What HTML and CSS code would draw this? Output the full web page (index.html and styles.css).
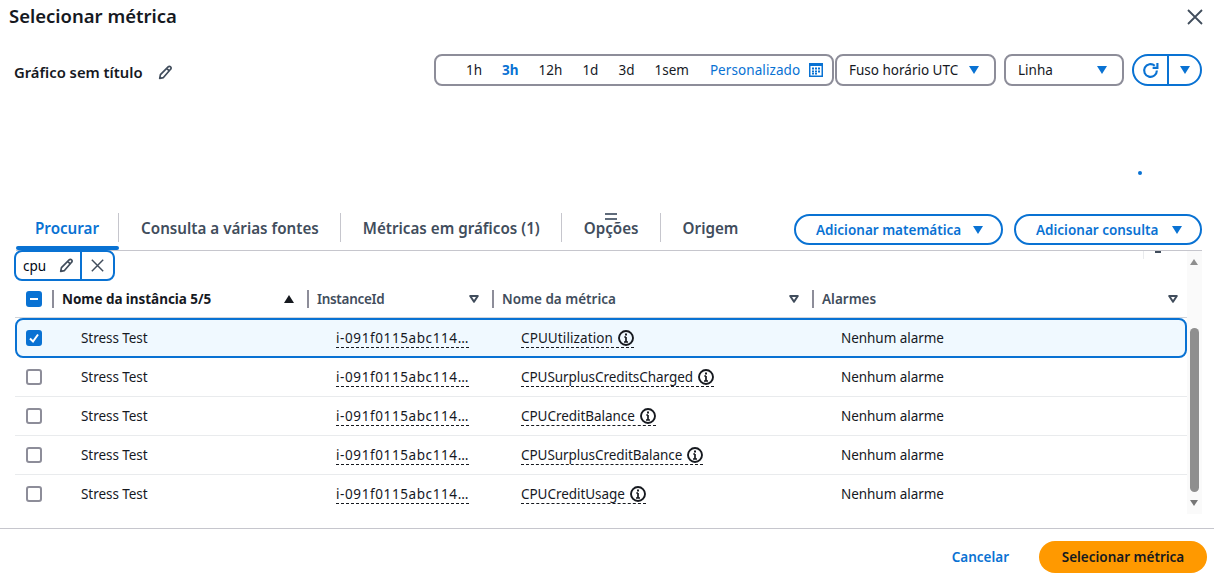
FILE: index.html
```html
<!DOCTYPE html>
<html lang="pt">
<head>
  <meta charset="UTF-8">
  <title>Selecionar métrica</title>
  <link rel="stylesheet" href="styles.css">
</head>
<body>
  <svg class="defs" width="0" height="0">
    <symbol id="pencil" viewBox="0 0 16 16"><path d="M1.8 14.2l.8-4L10.800 2c.8-.8 1.900-.8 2.600 0 .8.7.8 1.800 0 2.600L5.800 13.400l-4 .8zM9.300 3.500l3.200 3.200" fill="none" stroke="currentColor" stroke-width="1.8" stroke-linejoin="round"/></symbol>
    <symbol id="close" viewBox="0 0 16 16"><path d="M1 1l14 14M15 1L1 15" fill="none" stroke="currentColor" stroke-width="1.8"/></symbol>
    <symbol id="caret" viewBox="0 0 10 8"><path d="M0 0h10L5 8z" fill="currentColor"/></symbol>
    <symbol id="filter" viewBox="0 0 10 8"><path d="M1.200 1h7.600L5 6.800z" fill="none" stroke="currentColor" stroke-width="2" stroke-linejoin="round"/></symbol>
    <symbol id="info" viewBox="0 0 16 16"><circle cx="8" cy="8" r="7" fill="none" stroke="currentColor" stroke-width="1.9"/><path d="M8 7v5M6 12h4M6.300 7H8" fill="none" stroke="currentColor" stroke-width="1.7"/><rect x="7" y="3.500" width="2" height="2" fill="currentColor"/></symbol>
  </svg>

  <div class="modal-head">
    <h1>Selecionar métrica</h1>
    <svg class="close-icon"><use href="#close"/></svg>
  </div>

  <div class="toolbar">
    <div class="chart-title">
      <span>Gráfico sem título</span>
      <svg class="pencil-icon"><use href="#pencil"/></svg>
    </div>
    <div class="controls">
      <div class="box range">
        <span>1h</span>
        <span class="active">3h</span>
        <span>12h</span>
        <span>1d</span>
        <span>3d</span>
        <span>1sem</span>
        <span class="custom">Personalizado
          <svg class="cal-icon" viewBox="0 0 14 14"><path fill="#0972d3" fill-rule="evenodd" d="M0 0h14v14H0zM1.500 3v9.500h11V3z"/><path fill="#0972d3" d="M3 4.500h2v2H3zM6 4.500h2v2H6zM9 4.500h2v2H9zM3 7.500h2v2H3zM6 7.500h2v2H6zM9 7.500h2v2H9zM3 10h2v1.500H3zM6 10h2v1.500H6z"/></svg>
        </span>
      </div>
      <div class="box select tz">Fuso horário UTC <svg class="caret-icon"><use href="#caret"/></svg></div>
      <div class="box select kind">Linha <svg class="caret-icon"><use href="#caret"/></svg></div>
      <div class="refresh">
        <span class="refresh-left">
          <svg class="refresh-icon" viewBox="0 0 16 16"><path d="M14 8a6 6 0 1 1-2-4.500" fill="none" stroke="currentColor" stroke-width="2"/><path d="M14.500 1v4.500H10" fill="none" stroke="currentColor" stroke-width="2"/></svg>
        </span>
        <span class="refresh-right"><svg class="caret-icon"><use href="#caret"/></svg></span>
      </div>
    </div>
  </div>

  <div class="chart-area"><span class="dot"></span></div>

  <div class="tabs-row">
    <div class="tabs">
      <span class="tab current">Procurar</span>
      <span class="tab">Consulta a várias fontes</span>
      <span class="tab">Métricas em gráficos (1)</span>
      <span class="tab">Opções</span>
      <span class="tab last">Origem</span>
      <span class="drag-mark"></span>
    </div>
    <div class="tab-actions">
      <button class="pill math">Adicionar matemática <svg class="caret-icon"><use href="#caret"/></svg></button>
      <button class="pill query">Adicionar consulta <svg class="caret-icon"><use href="#caret"/></svg></button>
    </div>
  </div>

  <div class="results">
    <div class="table-wrap">
      <div class="filter-tag">
        <span class="filter-text">cpu <svg class="pencil-small"><use href="#pencil"/></svg></span>
        <span class="filter-x"><svg class="x-small"><use href="#close"/></svg></span>
      </div>

      <div class="row head">
        <div class="cell-check"><span class="check on"><span class="dash"></span></span></div>
        <div class="th sorted">Nome da instância 5/5 <svg class="sort-icon"><use href="#caret"/></svg></div>
        <div class="th narrow">InstanceId <svg class="filter-icon"><use href="#filter"/></svg></div>
        <div class="th">Nome da métrica <svg class="filter-icon"><use href="#filter"/></svg></div>
        <div class="th">Alarmes <svg class="filter-icon"><use href="#filter"/></svg></div>
      </div>

      <div class="row item selected">
        <div class="cell-check"><span class="check on"><svg class="tick" viewBox="0 0 12 12"><path d="M2 6.500l3 3 5-7" fill="none" stroke="#fff" stroke-width="2"/></svg></span></div>
        <div class="td">Stress Test</div>
        <div class="td"><span class="dashed wide">i-091f0115abc114…</span></div>
        <div class="td"><span class="dashed roomy">CPUUtilization <svg class="info-icon"><use href="#info"/></svg></span></div>
        <div class="td">Nenhum alarme</div>
      </div>
      <div class="row item">
        <div class="cell-check"><span class="check"></span></div>
        <div class="td">Stress Test</div>
        <div class="td"><span class="dashed wide">i-091f0115abc114…</span></div>
        <div class="td"><span class="dashed">CPUSurplusCreditsCharged <svg class="info-icon"><use href="#info"/></svg></span></div>
        <div class="td">Nenhum alarme</div>
      </div>
      <div class="row item">
        <div class="cell-check"><span class="check"></span></div>
        <div class="td">Stress Test</div>
        <div class="td"><span class="dashed wide">i-091f0115abc114…</span></div>
        <div class="td"><span class="dashed">CPUCreditBalance <svg class="info-icon"><use href="#info"/></svg></span></div>
        <div class="td">Nenhum alarme</div>
      </div>
      <div class="row item">
        <div class="cell-check"><span class="check"></span></div>
        <div class="td">Stress Test</div>
        <div class="td"><span class="dashed wide">i-091f0115abc114…</span></div>
        <div class="td"><span class="dashed">CPUSurplusCreditBalance <svg class="info-icon"><use href="#info"/></svg></span></div>
        <div class="td">Nenhum alarme</div>
      </div>
      <div class="row item end">
        <div class="cell-check"><span class="check"></span></div>
        <div class="td">Stress Test</div>
        <div class="td"><span class="dashed wide">i-091f0115abc114…</span></div>
        <div class="td"><span class="dashed">CPUCreditUsage <svg class="info-icon"><use href="#info"/></svg></span></div>
        <div class="td">Nenhum alarme</div>
      </div>
    </div>

    <div class="scrollbar">
      <span class="arrow up"></span>
      <span class="thumb"></span>
      <span class="arrow down"></span>
    </div>
    <span class="stray-line"></span>
    <span class="stray-caret"></span>
  </div>

  <div class="modal-foot">
    <span class="cancel">Cancelar</span>
    <button class="primary">Selecionar métrica</button>
  </div>
</body>
</html>
```

FILE: styles.css
```css
* {
  box-sizing: border-box;
}
html, body {
  margin: 0;
  padding: 0;
  height: 576px;
  overflow: hidden;
}
body {
  background: #fff;
  color: #000716;
  font-family: "Noto Sans", sans-serif;
  font-size: 13.5px;
  position: relative;
}
.defs {
  position: absolute;
}

/* header */
.modal-head {
  height: 54px;
  display: flex;
  justify-content: space-between;
  align-items: flex-start;
  padding: 3px 11px 0 9px;
}
.modal-head h1 {
  margin: 0;
  font-size: 18.5px;
  line-height: 26px;
  font-weight: 600;
  color: #16191f;
}
.close-icon {
  width: 16px;
  height: 16px;
  margin-top: 6px;
  color: #414d5c;
}

/* toolbar */
.toolbar {
  height: 33px;
  display: flex;
  justify-content: space-between;
  align-items: flex-start;
  padding: 0 12px 0 14px;
}
.chart-title {
  display: flex;
  align-items: center;
  gap: 15px;
  margin-top: 8px;
  font-size: 14.8px;
  font-weight: 600;
  color: #16191f;
}
.pencil-icon {
  width: 15px;
  height: 15px;
  color: #414d5c;
}
.controls {
  display: flex;
  align-items: center;
}
.box {
  height: 32px;
  border: 2px solid #8d8d99;
  border-radius: 8px;
  display: flex;
  align-items: center;
  color: #16191f;
}
.range {
  width: 400px;
  padding-left: 30px;
  gap: 20px;
}
.range .active {
  color: #0972d3;
  font-weight: 700;
}
.range .custom {
  color: #0972d3;
  display: flex;
  align-items: center;
  gap: 9px;
  margin-left: 1px;
  letter-spacing: 0.08px;
}
.cal-icon {
  width: 14px;
  height: 14px;
}
.caret-icon {
  width: 10px;
  height: 8px;
  color: #0972d3;
}
.select {
  justify-content: space-between;
  padding: 0 15px 0 12px;
}
.tz {
  width: 161px;
  margin-left: 1px;
}
.kind {
  width: 120px;
  margin-left: 8px;
}
.refresh {
  width: 70px;
  height: 32px;
  margin-left: 8px;
  border: 2px solid #0972d3;
  border-radius: 16px;
  display: flex;
  color: #0972d3;
}
.refresh-left {
  width: 35px;
  border-right: 2px solid #0972d3;
  display: flex;
  align-items: center;
  justify-content: center;
}
.refresh-right {
  flex: 1;
  display: flex;
  align-items: center;
  justify-content: center;
}
.refresh-icon {
  width: 17px;
  height: 17px;
}

/* empty chart */
.chart-area {
  height: 126px;
  position: relative;
}
.dot {
  position: absolute;
  left: 1138px;
  top: 84px;
  width: 4px;
  height: 4px;
  border-radius: 50%;
  background: #0972d3;
}

/* tabs */
.tabs-row {
  height: 38px;
  margin-left: 16px;
  border-bottom: 1px solid #c6c6cd;
  display: flex;
  justify-content: space-between;
  width: 1186px;
}
.tabs {
  display: flex;
  position: relative;
  height: 37px;
}
.tab {
  font-size: 15.2px;
  font-weight: 600;
  color: #414d5c;
  height: 29px;
  line-height: 31px;
  padding: 0 21px 0 22px;
  border-right: 1px solid #c6c6cd;
}
.tab.current {
  color: #0972d3;
  padding: 0 19px 0 19px;
}
.tab.last {
  border-right: none;
}
.tabs .current::after {
  content: "";
  position: absolute;
  left: 0;
  top: 33px;
  width: 103px;
  height: 4px;
  border-radius: 2px;
  background: #0972d3;
}
.drag-mark {
  position: absolute;
  left: 589px;
  top: 0;
  width: 12px;
  height: 7px;
  border-top: 2px solid #5f6b7a;
  border-bottom: 2px solid #5f6b7a;
}
.tab-actions {
  display: flex;
  gap: 11px;
  padding-top: 1px;
}
.pill {
  height: 31px;
  border: 2px solid #0972d3;
  border-radius: 16px;
  background: #fff;
  color: #0972d3;
  font-family: inherit;
  font-size: 13.5px;
  font-weight: 600;
  display: flex;
  align-items: center;
  justify-content: space-between;
  padding: 0 18px 0 20px;
}
.pill.math {
  width: 209px;
}
.pill.query {
  width: 188px;
}

/* results table */
.results {
  height: 278px;
  border-bottom: 1px solid #c6c6cd;
  position: relative;
  padding: 30px 0 0 15px;
}
.table-wrap {
  width: 1172px;
}
.filter-tag {
  position: absolute;
  left: 14px;
  top: -1px;
  width: 101px;
  height: 31px;
  border: 2px solid #0972d3;
  border-radius: 8px;
  display: flex;
  align-items: center;
}
.filter-text {
  width: 66px;
  height: 100%;
  border-right: 2px solid #0972d3;
  padding: 0 6px 0 7px;
  display: flex;
  align-items: center;
  justify-content: space-between;
}
.filter-x {
  flex: 1;
  display: flex;
  align-items: center;
  justify-content: center;
  color: #414d5c;
}
.pencil-small {
  width: 15px;
  height: 15px;
  color: #414d5c;
}
.x-small {
  width: 13px;
  height: 13px;
}
.row {
  display: grid;
  grid-template-columns: 38px 255px 185px 320px 1fr;
  align-items: center;
}
.row.head {
  height: 37px;
  border-bottom: 1px solid #d1d5db;
}
.cell-check {
  padding-left: 11px;
  display: flex;
}
.check {
  width: 16px;
  height: 16px;
  border: 2px solid #8d8d99;
  border-radius: 3px;
  display: flex;
  align-items: center;
  justify-content: center;
  background: #fff;
}
.check.on {
  background: #0972d3;
  border-color: #0972d3;
}
.dash {
  width: 8px;
  height: 2px;
  background: #fff;
}
.tick {
  width: 12px;
  height: 12px;
}
.th {
  height: 18px;
  margin-left: -1px;
  border-left: 2px solid #8d8d99;
  padding: 0 7px 0 8px;
  line-height: 18px;
  font-weight: 600;
  color: #414d5c;
  display: flex;
  align-items: center;
  justify-content: space-between;
}
.th.sorted {
  color: #16191f;
  font-weight: 700;
  letter-spacing: -0.05px;
  padding-right: 14px;
}
.th.narrow {
  letter-spacing: -0.3px;
}
.sort-icon {
  width: 10px;
  height: 8px;
  color: #16191f;
  transform: rotate(180deg);
}
.filter-icon {
  width: 10px;
  height: 8px;
  color: #414d5c;
  margin-right: 7px;
}
.th:last-child .filter-icon {
  margin-right: 2px;
}
.row.item {
  height: 39px;
  border-bottom: 1px solid #e9ebed;
}
.row.item.end {
  border-bottom-color: transparent;
}
.row.item.selected {
  height: 40px;
  grid-template-columns: 36px 255px 185px 320px 1fr;
  background: #f0f9ff;
  border: 2px solid #0972d3;
  border-radius: 8px;
}
.row.selected .cell-check {
  padding-left: 9px;
}
.td {
  padding-left: 28px;
  color: #16191f;
  white-space: nowrap;
  letter-spacing: -0.05px;
}
.dashed {
  border-bottom: 1px dashed #16191f;
  display: inline-flex;
  align-items: center;
  gap: 5px;
}
.dashed.wide {
  letter-spacing: 0.6px;
}
.dashed.roomy {
  letter-spacing: 0.1px;
}
.info-icon {
  width: 16px;
  height: 16px;
  color: #16191f;
}

/* scrollbar */
.scrollbar {
  position: absolute;
  left: 1187px;
  top: 0;
  width: 15px;
  height: 263px;
  background: #fafafa;
}
.thumb {
  position: absolute;
  left: 3px;
  top: 77px;
  width: 9px;
  height: 164px;
  border-radius: 5px;
  background: #8f8f8f;
}
.arrow {
  position: absolute;
  left: 3px;
  width: 0;
  height: 0;
  border-left: 4.5px solid transparent;
  border-right: 4.5px solid transparent;
}
.arrow.up {
  top: 8px;
  border-bottom: 6px solid #8f8f8f;
}
.arrow.down {
  top: 249px;
  border-top: 6px solid #777;
}
.stray-line {
  position: absolute;
  left: 1143px;
  top: 0;
  width: 1px;
  height: 8px;
  background: #e9ebed;
}
.stray-caret {
  position: absolute;
  left: 1155px;
  top: 0;
  width: 6px;
  height: 2px;
  background: #414d5c;
}

/* footer */
.modal-foot {
  display: flex;
  justify-content: flex-end;
  align-items: center;
  gap: 30px;
  padding: 12px 7px 0 0;
}
.cancel {
  color: #0972d3;
  font-weight: 600;
}
.primary {
  width: 168px;
  height: 32px;
  border: none;
  border-radius: 16px;
  background: #ff9900;
  color: #16191f;
  font-family: inherit;
  font-size: 13.5px;
  font-weight: 600;
}
```
